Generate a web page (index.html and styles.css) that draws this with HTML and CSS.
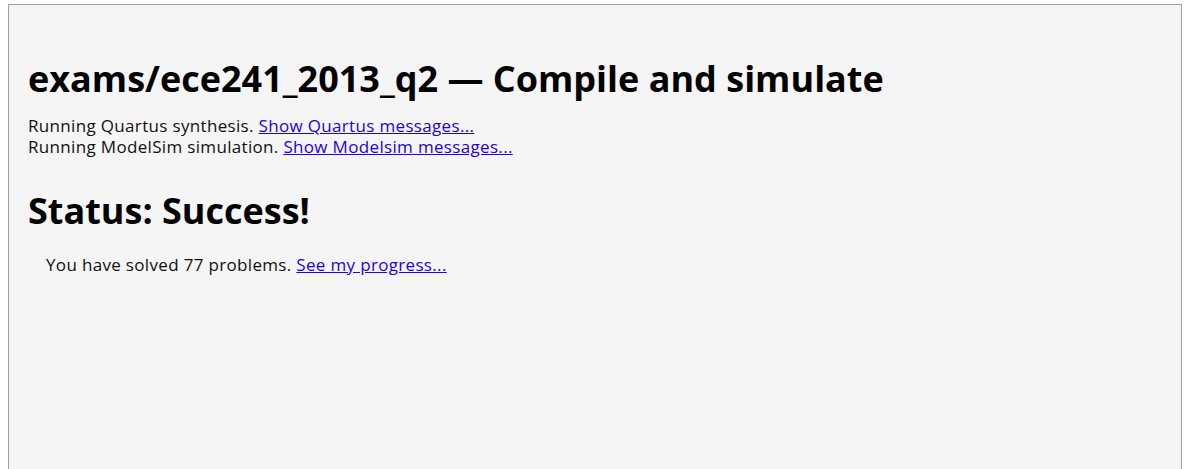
FILE: index.html
```html
<!DOCTYPE html>
<html>
<head>
<meta charset="utf-8">
<link rel="stylesheet" href="styles.css">
</head>
<body>
<div class="panel">
  <h1 class="title">exams/ece241_2013_q2 — Compile and simulate</h1>
  <div class="log">
    <div>Running Quartus synthesis. <a href="#">Show Quartus messages...</a></div>
    <div>Running ModelSim simulation. <a href="#">Show Modelsim messages...</a></div>
  </div>
  <h2 class="status">Status: Success!</h2>
  <div class="result">You have solved 77 problems. <a href="#">See my progress...</a></div>
</div>
</body>
</html>
```
FILE: styles.css
```css
html, body {
  margin: 0;
  background: #ffffff;
}
body {
  padding: 4px 5px 0 8px;
}
.panel {
  background: #f5f5f5;
  border: 1px solid #a0a0a0;
  border-bottom: none;
  padding: 1px 19px 0 19px;
  min-height: 470px;
  font-family: "Open Sans", "Liberation Sans", sans-serif;
  font-size: 17px;
  letter-spacing: 0.33px;
  line-height: 21px;
  color: #111;
}
.title {
  font-family: "Open Sans", sans-serif;
  font-weight: 700;
  font-size: 36px;
  letter-spacing: 0;
  line-height: 44px;
  margin: 51px 0 14px 0;
  color: #000;
}
.log a, .result a {
  color: #2200ee;
}
.status {
  font-family: "Open Sans", sans-serif;
  font-weight: 700;
  font-size: 36px;
  letter-spacing: 0;
  line-height: 48px;
  margin: 30px 0 19px 0;
  color: #000;
}
.result {
  padding-left: 18px;
}
```
